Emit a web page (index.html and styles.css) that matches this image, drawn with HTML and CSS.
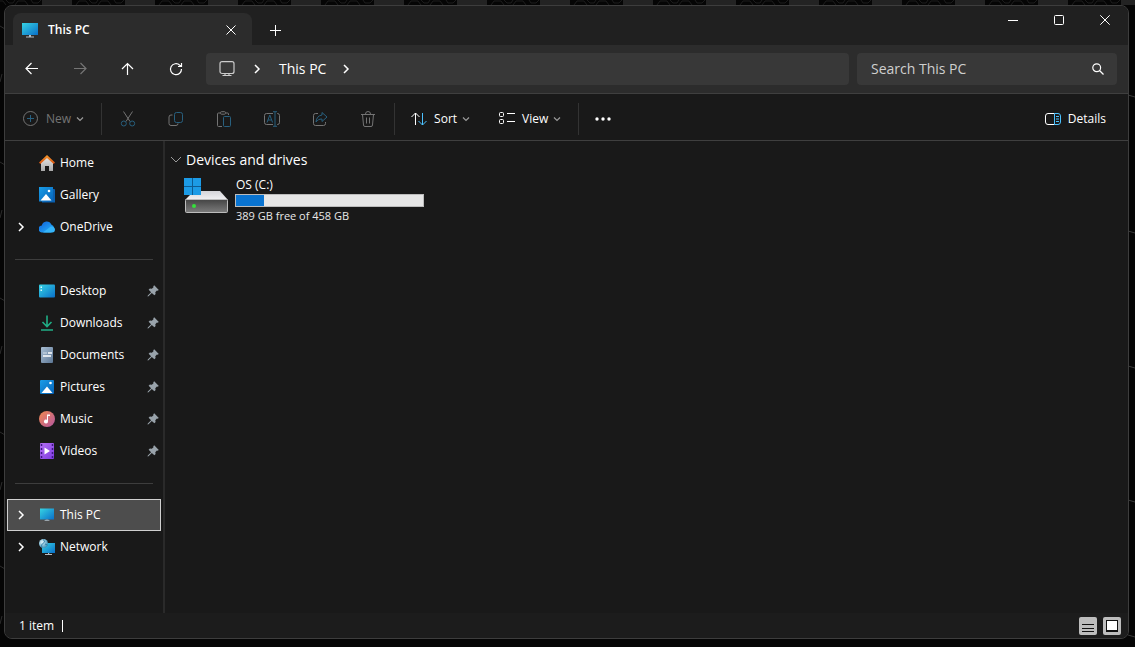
FILE: index.html
```
<!DOCTYPE html>
<html lang="en">
<head>
<meta charset="utf-8">
<meta name="viewport" content="width=device-width, initial-scale=1">
<title>This PC</title>
<link rel="stylesheet" href="styles.css">
</head>
<body>
<svg class="defs" aria-hidden="true">
  <defs>
    <linearGradient id="screen" x1="0" y1="0" x2="1" y2="1"><stop offset="0" stop-color="#36d3e3"/><stop offset="1" stop-color="#0a6fc9"/></linearGradient>
    <linearGradient id="photo" x1="0" y1="0" x2="1" y2="1"><stop offset="0" stop-color="#199de8"/><stop offset="1" stop-color="#0663b8"/></linearGradient>
    <linearGradient id="roof" x1="0" y1="0" x2="0" y2="1"><stop offset="0" stop-color="#f79b2e"/><stop offset="1" stop-color="#d9500f"/></linearGradient>
    <linearGradient id="wall" x1="0" y1="0" x2="0" y2="1"><stop offset="0" stop-color="#e6e6e6"/><stop offset="1" stop-color="#a9a9a9"/></linearGradient>
    <linearGradient id="cloud" x1="0" y1="0" x2="1" y2="1"><stop offset="0" stop-color="#0f5fd8"/><stop offset="1" stop-color="#27b8ff"/></linearGradient>
    <linearGradient id="doc" x1="0" y1="0" x2="1" y2="1"><stop offset="0" stop-color="#a9bfd4"/><stop offset="1" stop-color="#5c7694"/></linearGradient>
    <linearGradient id="music" x1="0" y1="0" x2="1" y2="1"><stop offset="0" stop-color="#f28a4e"/><stop offset="1" stop-color="#b355a0"/></linearGradient>
    <linearGradient id="video" x1="0" y1="0" x2="1" y2="1"><stop offset="0" stop-color="#b56ff5"/><stop offset="1" stop-color="#7d3be0"/></linearGradient>
    <linearGradient id="front" x1="0" y1="0" x2="0" y2="1"><stop offset="0" stop-color="#444"/><stop offset="1" stop-color="#7c7c7c"/></linearGradient>
    <linearGradient id="top" x1="0" y1="0" x2="0" y2="1"><stop offset="0" stop-color="#d4d4d8"/><stop offset="1" stop-color="#f2f2f4"/></linearGradient>
    <radialGradient id="globe" cx=".35" cy=".35" r=".7"><stop offset="0" stop-color="#e3f5fb"/><stop offset="1" stop-color="#3a91b8"/></radialGradient>
    <pattern id="ridges" width="83" height="5" patternUnits="userSpaceOnUse" x="42">
      <path d="M0 0h30v5H0z" fill="#232323"/>
      <path d="M34 5l3-4h7l3 4M56 5l3-4h7l3 4M47 0l3 3h4l2-3M72 0l2 3h5l3-3" fill="none" stroke="#1c1c1c"/>
    </pattern>
    <symbol id="i-pin" viewBox="0 0 12 12"><path d="M7.200 .3 11.800 4.900 10.600 5.800 9.900 5.600 8.300 7.200 8.600 9 7.400 10.300 4.800 7.900 1.500 11.200 .5 11.500.8 10.500 4.100 7.200 1.600 4.700 2.900 3.500 4.800 3.800 6.500 2.200 6.300 1.300z" fill="#99a3ab"/></symbol>
    <symbol id="i-right" viewBox="0 0 8 10"><path d="M2 1l4 4-4 4" fill="none" stroke="currentColor" stroke-width="1.500"/></symbol>
    <symbol id="i-down" viewBox="0 0 8 8"><path d="M1 2.500l3 3 3-3" fill="none" stroke="currentColor" stroke-width="1.200"/></symbol>
    <symbol id="i-pc" viewBox="0 0 16 16"><path d="M0 1h16v12H0z" fill="url(#screen)"/><path d="M7 13h2v1.500h3v1H4v-1h3z" fill="#b5bcc2"/></symbol>
  </defs>
</svg>
<svg class="wallpaper" aria-hidden="true">
  <rect width="100%" height="5" fill="url(#ridges)"/>
  <path d="M0 26l5 3M0 162l5 3M0 298l5 3M0 432l5 3M0 566l5 3M0 82l2-8M0 218l2-8M0 354l2-8M0 490l2-8M0 624l2-8" stroke="#2c2c2c" fill="none"/>
  <svg x="100%" overflow="visible"><path d="M-7 95l7 2M-7 231l7 2M-7 366l7 2M-7 500l7 2M-7 635l7 2" stroke="#3a3a3a" fill="none"/></svg>
</svg>

<div class="window">
  <header class="titlebar">
    <div class="tab">
      <svg class="icon16" viewBox="0 0 16 16"><use href="#i-pc"/></svg>
      <span class="tab-title">This PC</span>
      <button class="tab-close" aria-label="Close tab"><svg width="10" height="10" viewBox="0 0 10 10"><path d="M.5.5l9 9m0-9l-9 9" stroke="currentColor"/></svg></button>
    </div>
    <button class="new-tab" aria-label="New tab"><svg width="11" height="11" viewBox="0 0 11 11"><path d="M5.500 0v11M0 5.500h11" stroke="currentColor"/></svg></button>
    <div class="caption">
      <button aria-label="Minimize"><svg width="10" height="10" viewBox="0 0 10 10"><path d="M0 5.500h10" stroke="currentColor"/></svg></button>
      <button aria-label="Maximize"><svg width="10" height="10" viewBox="0 0 10 10"><rect x=".5" y=".5" width="9" height="9" rx="1" fill="none" stroke="currentColor"/></svg></button>
      <button aria-label="Close"><svg width="10" height="10" viewBox="0 0 10 10"><path d="M.3.3l9.400 9.400m0-9.400L.3 9.700" stroke="currentColor"/></svg></button>
    </div>
  </header>

  <nav class="navbar" aria-label="Navigation">
    <div class="nav-buttons">
      <button aria-label="Back"><svg class="icon16" viewBox="0 0 16 16"><path d="M14 7.500H2.500M7.500 2l-5.500 5.500 5.500 5.500"/></svg></button>
      <button aria-label="Forward" disabled><svg class="icon16" viewBox="0 0 16 16"><path d="M2 7.500h11.500M8.500 2l5.500 5.500L8.500 13"/></svg></button>
      <button aria-label="Up"><svg class="icon16" viewBox="0 0 16 16"><path d="M7.500 14V2.500M2 8l5.500-5.500L13 8"/></svg></button>
      <button aria-label="Refresh"><svg class="icon16" viewBox="0 0 16 16"><path d="M13.500 8A5.500 5.500 0 1 1 11.800 4.200L13.500 5.500M13.500 2v3.500H10"/></svg></button>
    </div>
    <div class="address">
      <svg class="icon16 device" viewBox="0 0 16 16"><rect x="1" y=".7" width="14" height="11.800" rx="2"/><path d="M6 12.500v2M10 12.500v2M3.500 14.500h9"/></svg>
      <svg class="crumb-arrow" viewBox="0 0 8 10"><use href="#i-right"/></svg>
      <a class="crumb" href="#">This PC</a>
      <svg class="crumb-arrow" viewBox="0 0 8 10"><use href="#i-right"/></svg>
    </div>
    <label class="search">
      <input type="text" placeholder="Search This PC" aria-label="Search This PC">
      <svg width="12" height="12" viewBox="0 0 12 12"><circle cx="4.700" cy="4.700" r="3.900"/><path d="M7.500 7.500l4 4"/></svg>
    </label>
  </nav>

  <div class="toolbar" role="toolbar" aria-label="Commands">
    <button class="cmd new" disabled>
      <svg class="icon16" viewBox="0 0 16 16"><circle cx="7.500" cy="7.500" r="7"/><path class="accent" d="M7.500 4v7M4 7.500h7"/></svg>
      <span>New</span><svg class="chev" viewBox="0 0 8 8"><use href="#i-down"/></svg>
    </button>
    <span class="sep"></span>
    <div class="tools">
      <button aria-label="Cut" disabled><svg class="icon16" viewBox="0 0 16 16"><path d="M3.500.5l6.500 10M12.500.5L6 10.500"/><circle class="accent" cx="3.800" cy="12.500" r="2.500"/><circle class="accent" cx="12.200" cy="12.500" r="2.500"/></svg></button>
      <button aria-label="Copy" disabled><svg class="icon16" viewBox="0 0 16 16"><path d="M4.500 4H3a2 2 0 0 0-2 2v6.500a2 2 0 0 0 2 2h5a2 2 0 0 0 2-2"/><rect class="accent" x="6.500" y="1.500" width="8" height="10" rx="2"/></svg></button>
      <button aria-label="Paste" disabled><svg class="icon16" viewBox="0 0 16 16"><path d="M6 15.500H2.500a1 1 0 0 1-1-1V3a1 1 0 0 1 1-1H4M10 2h1.500a1 1 0 0 1 1 1v1"/><rect x="4.500" y=".7" width="5" height="2.500" rx="1"/><rect class="accent" x="7.500" y="5.500" width="7" height="10" rx="1"/></svg></button>
      <button aria-label="Rename" disabled><svg class="icon16" viewBox="0 0 16 16"><path d="M9 2.500H2.500a2 2 0 0 0-2 2v7a2 2 0 0 0 2 2H9M13 2.500h.5a2 2 0 0 1 2 2v7a2 2 0 0 1-2 2H13"/><path class="accent" d="M3 11.500L5.800 4l2.800 7.500M4 9h3.500M11 1v14M9 .7h4M9 15.300h4"/></svg></button>
      <button aria-label="Share" disabled><svg class="icon16" viewBox="0 0 16 16"><path d="M6 2.500H3.500a2 2 0 0 0-2 2v8a2 2 0 0 0 2 2h8a2 2 0 0 0 2-2V11"/><path class="accent" d="M10 1.500L15 6l-5 4.500V8C7 8 5.500 9 4 11c.3-4 2.500-6.500 6-7z"/></svg></button>
      <button aria-label="Delete" disabled><svg class="icon16" viewBox="0 0 16 16"><path d="M1 3.500h14M5.500 3.500V3a2.500 2.500 0 0 1 5 0v.5M2.500 3.500l1 10.500a1.500 1.500 0 0 0 1.500 1.500h6a1.500 1.500 0 0 0 1.500-1.500l1-10.500M6.500 6.500v6M9.500 6.500v6"/></svg></button>
    </div>
    <span class="sep"></span>
    <div class="menus">
      <button class="cmd">
        <svg class="icon16" viewBox="0 0 16 16"><path d="M4.500 14V2M.5 6l4-4 4 4"/><path class="accent" d="M11.500 2v12M7.500 10l4 4 4-4"/></svg>
        <span>Sort</span><svg class="chev" viewBox="0 0 8 8"><use href="#i-down"/></svg>
      </button>
      <button class="cmd">
        <svg class="icon16" viewBox="0 0 16 16"><rect x=".5" y="1.500" width="4" height="4" rx="1"/><rect x=".5" y="8.500" width="4" height="4" rx="1"/><path d="M8 2.500h8M8 10.500h8"/></svg>
        <span>View</span><svg class="chev" viewBox="0 0 8 8"><use href="#i-down"/></svg>
      </button>
    </div>
    <span class="sep"></span>
    <button class="more" aria-label="See more"><svg width="16" height="4" viewBox="0 0 16 4"><circle cx="2" cy="2" r="1.700"/><circle cx="8" cy="2" r="1.700"/><circle cx="14" cy="2" r="1.700"/></svg></button>
    <button class="cmd details">
      <svg class="icon16" viewBox="0 0 16 16"><path d="M9.500 2.500H3a2.500 2.500 0 0 0-2.500 2.500v6A2.500 2.500 0 0 0 3 13.500h6.500"/><path class="accent" d="M9.500 2.500H13A2.500 2.500 0 0 1 15.500 5v6a2.500 2.500 0 0 1-2.500 2.500H9.500zM11 5.500h3M11 8h3M11 10.500h3"/></svg>
      <span>Details</span>
    </button>
  </div>

  <div class="body">
    <aside class="sidebar">
      <ul class="places">
        <li><a href="#"><span class="twist"></span><svg class="icon16" viewBox="0 0 16 16"><path d="M2 7l6-5 6 5v9h-4v-5H6v5H2z" fill="url(#wall)"/><path d="M8 0l8 7.500-1.300 1.500L8 3 1.300 9 0 7.500z" fill="url(#roof)"/></svg><span>Home</span></a></li>
        <li><a href="#"><span class="twist"></span><svg class="icon16" viewBox="0 0 16 16"><path d="M3 2h12a1 1 0 0 1 1 1v12.500H3z" fill="#0b5fae"/><path d="M0 0h14v14.500H0z" fill="url(#photo)"/><path d="M1.500 13.500L7 7l5.500 6.500z" fill="#fff"/><circle cx="10" cy="4" r="1.300" fill="#fff"/></svg><span>Gallery</span></a></li>
        <li><a href="#"><span class="twist"><svg viewBox="0 0 8 10"><use href="#i-right"/></svg></span><svg class="icon16" viewBox="0 0 16 16"><path d="M3.500 13.500A3.500 3.500 0 0 1 2.800 6.500a5 5 0 0 1 9.500-1A4.200 4.200 0 0 1 12 13.500z" fill="url(#cloud)"/><path d="M4 13.500L11.800 7.500c2.800-.3 4.200 1.500 4.200 3.100a2.900 2.900 0 0 1-3 2.900z" fill="#35b5fa"/></svg><span>OneDrive</span></a></li>
        <li class="rule"></li>
        <li><a href="#"><span class="twist"></span><svg class="icon16" viewBox="0 0 16 16"><rect y="1.500" width="16" height="13" rx="1" fill="url(#screen)"/><path d="M1.500 3.500h1.500V5H1.500zM1.500 6.500h1.500V8H1.500z" fill="#d9fbff"/></svg><span>Desktop</span><svg class="pin" viewBox="0 0 12 12"><use href="#i-pin"/></svg></a></li>
        <li><a href="#"><span class="twist"></span><svg class="icon16" viewBox="0 0 16 16"><path d="M8 .5v11M3.500 7L8 11.500 12.500 7M2 15h12" fill="none" stroke="#20ae86" stroke-width="1.600"/></svg><span>Downloads</span><svg class="pin" viewBox="0 0 12 12"><use href="#i-pin"/></svg></a></li>
        <li><a href="#"><span class="twist"></span><svg class="icon16" viewBox="0 0 16 16"><rect x="2" width="12" height="16" rx="1" fill="url(#doc)"/><path d="M9 6h4M4 9h8" stroke="#fff" stroke-width="1.500"/><path d="M4 6h4" stroke="#d7e1eb"/></svg><span>Documents</span><svg class="pin" viewBox="0 0 12 12"><use href="#i-pin"/></svg></a></li>
        <li><a href="#"><span class="twist"></span><svg class="icon16" viewBox="0 0 16 16"><rect x="1" y="1" width="14" height="14" rx="1" fill="url(#photo)"/><path d="M2.500 14L8 7.500l5.500 6.500z" fill="#fff"/><circle cx="11.500" cy="4" r="1.300" fill="#fff"/></svg><span>Pictures</span><svg class="pin" viewBox="0 0 12 12"><use href="#i-pin"/></svg></a></li>
        <li><a href="#"><span class="twist"></span><svg class="icon16" viewBox="0 0 16 16"><circle cx="8" cy="8" r="8" fill="url(#music)"/><path d="M8 3.500h3v1.600H9v5.400a2 2 0 1 1-1-1.700z" fill="#fff"/></svg><span>Music</span><svg class="pin" viewBox="0 0 12 12"><use href="#i-pin"/></svg></a></li>
        <li><a href="#"><span class="twist"></span><svg class="icon16" viewBox="0 0 16 16"><rect x="1" width="14" height="16" rx="1" fill="url(#video)"/><path d="M2.500 1v14M13.500 1v14" stroke="#3f1683" stroke-width="1.500" stroke-dasharray="2 2"/><path d="M5.500 4.500v7L11 8z" fill="#fff"/></svg><span>Videos</span><svg class="pin" viewBox="0 0 12 12"><use href="#i-pin"/></svg></a></li>
        <li class="rule"></li>
        <li><a href="#" class="selected" aria-current="page"><span class="twist"><svg viewBox="0 0 8 10"><use href="#i-right"/></svg></span><svg class="icon16" viewBox="0 0 16 16"><path d="M1 1.500h14v11H1z" fill="url(#screen)"/><path d="M7 12.500h2l2 1.500H5z" fill="#9aa5ad"/></svg><span>This PC</span></a></li>
        <li><a href="#"><span class="twist"><svg viewBox="0 0 8 10"><use href="#i-right"/></svg></span><svg class="icon16" viewBox="0 0 16 16"><path d="M3 4h13v10H3z" fill="url(#screen)"/><path d="M9 14h1.200v1H13v1H6v-1h3z" fill="#b5bcc2"/><circle cx="4.500" cy="4.500" r="4.500" fill="url(#globe)"/><path d="M4 .5C6 2 6 3 4.500 4S2 6 3 8.500M6 5l2.500 1" stroke="#2f7fa8" fill="none"/></svg><span>Network</span></a></li>
      </ul>
    </aside>
    <main class="content">
      <h1 class="group"><svg viewBox="0 0 12 8"><path d="M1 1l5 5 5-5"/></svg><span>Devices and drives</span></h1>
      <a class="drive" href="#">
        <svg class="drive-icon" viewBox="0 0 45 36"><path d="M10 13h26l8 9H1z" fill="url(#top)"/><rect x="1.500" y="21.500" width="42" height="13" rx="1" fill="url(#front)" stroke="#bdbdbd"/><circle cx="10" cy="28" r="2" fill="#35e03a"/><path d="M0 0h17v17H0z" fill="#0d5c93"/><path d="M0 0h8v8H0zM9 0h8v8H9zM0 9h8v8H0zM9 9h8v8H9z" fill="#1c9be6"/></svg>
        <span class="drive-info">
          <span class="drive-name">OS (C:)</span>
          <span class="meter"><span class="meter-used" style="width:15%"></span></span>
          <span class="free">389 GB free of 458 GB</span>
        </span>
      </a>
    </main>
  </div>

  <footer class="status">
    <span class="count">1 item</span>
    <button aria-label="Details view"><svg width="18" height="18" viewBox="0 0 18 18"><path d="M3 7.500h12M3 11.500h12M3 14.500h12" stroke="#111"/></svg></button>
    <button aria-label="Large icons view"><svg width="18" height="18" viewBox="0 0 18 18"><rect x="3.500" y="3.500" width="11" height="10" fill="#fff" stroke="#111"/><path d="M3 14.500h12" stroke="#111"/></svg></button>
  </footer>
</div>
</body>
</html>
```
FILE: styles.css
```
* { box-sizing: border-box; }
body {
  margin: 0;
  min-height: 100vh;
  padding: 5px 6px 8px 4px;
  display: flex;
  background: #050505;
  color: #fff;
  font: 12px/16px "Open Sans", "Noto Sans", sans-serif;
}
button {
  display: flex;
  align-items: center;
  justify-content: center;
  margin: 0;
  padding: 0;
  border: 0;
  background: none;
  color: inherit;
  font: inherit;
}
a { color: inherit; text-decoration: none; }
svg { flex: none; display: block; }
.defs { position: absolute; width: 0; height: 0; }
.wallpaper { position: absolute; inset: 0; width: 100%; height: 100%; }
.icon16 { width: 16px; height: 16px; }

.window {
  position: relative;
  flex: 1;
  min-width: 0;
  display: flex;
  flex-direction: column;
  overflow: hidden;
  border: 1px solid #3d3d3d;
  border-radius: 8px;
  background: #191919;
}

.titlebar { display: flex; height: 39px; background: #202020; }
.tab {
  display: flex;
  align-items: center;
  width: 239px;
  margin: 7px 0 0 8px;
  padding: 1px 16px 0 9px;
  gap: 10px;
  border-radius: 8px 8px 0 0;
  background: #2c2c2c;
}
.tab-title { flex: 1; font-weight: 600; }
.new-tab { width: 32px; height: 32px; margin: 8px 0 0 7px; }
.caption { display: flex; margin-left: auto; height: 28px; }
.caption button { width: 46px; }

.navbar {
  display: flex;
  align-items: center;
  gap: 8px;
  padding: 8px 11px;
  background: #2c2c2c;
  border-bottom: 1px solid #3f3f3f;
}
.nav-buttons { display: flex; gap: 16px; margin-right: 6px; }
.nav-buttons button { width: 32px; height: 32px; }
.nav-buttons svg, .address .device, .search svg { fill: none; stroke: currentColor; stroke-width: 1.2; }
.nav-buttons button:disabled { color: #757575; }
.address {
  flex: 1;
  display: flex;
  align-items: center;
  height: 32px;
  padding: 0 13px;
  border-radius: 4px;
  background: #383838;
  font-size: 14px;
}
.address .device { color: #ccc; }
.crumb-arrow { width: 8px; height: 10px; margin: 0 18px; }
.crumb + .crumb-arrow { margin-left: 16px; }
.search {
  display: flex;
  align-items: center;
  width: 260px;
  height: 32px;
  padding: 0 13px 0 14px;
  border-radius: 4px;
  background: #383838;
}
.search input {
  flex: 1;
  min-width: 0;
  padding: 0;
  border: 0;
  outline: 0;
  background: none;
  color: #fff;
  font: inherit;
  font-size: 14px;
}
.search input::placeholder { color: #cfcfcf; opacity: 1; }

.toolbar {
  display: flex;
  align-items: center;
  height: 47px;
  padding: 3px 22px 0 18px;
  border-bottom: 1px solid #3f3f3f;
}
.toolbar svg { fill: none; stroke: currentColor; }
.toolbar .accent { stroke: #4cc2ff; }
.toolbar button:disabled { color: #747474; }
.toolbar button:disabled .accent { stroke: #28607f; }
.cmd { gap: 7px; height: 32px; }
.cmd .chev { width: 8px; height: 8px; margin-left: -2px; color: #9a9a9a; }
.sep { width: 1px; height: 32px; background: #333; }
.new { margin-right: 17px; }
.tools { display: flex; gap: 16px; margin: 0 10px; }
.tools button { width: 32px; height: 32px; }
.menus { display: flex; gap: 29px; margin: 0 17px 0 16px; }
.more { width: 48px; height: 32px; }
.toolbar .more svg { fill: currentColor; stroke: none; }
.details { margin-left: auto; }

.body { flex: 1; display: flex; min-height: 0; }
.sidebar { width: 160px; padding: 6px 2px 0; border-right: 2px solid #2a2a2a; }
.places { margin: 0; padding: 0; list-style: none; }
.places a {
  display: flex;
  align-items: center;
  gap: 5px;
  height: 32px;
  padding-left: 9px;
  border: 1px solid transparent;
}
.places a.selected { border-color: #d0d0d0; background: #4d4d4d; }
.twist { width: 17px; }
.twist svg { width: 8px; height: 10px; }
.pin { width: 12px; height: 12px; margin-left: auto; margin-right: 1px; }
.rule { height: 32px; padding: 16px 8px 0; }
.rule::before { content: ""; display: block; height: 1px; background: #3d3d3d; }

.content { flex: 1; padding: 9px 5px; }
.group {
  display: flex;
  align-items: center;
  gap: 4px;
  margin: 0;
  font-size: 14px;
  font-weight: 400;
  line-height: 20px;
}
.group svg { width: 12px; height: 8px; fill: none; stroke: #999; }
.drive { display: flex; gap: 6px; margin: 7px 0 0 14px; }
.drive-icon { width: 45px; height: 36px; margin-top: 1px; }
.drive-info { display: flex; flex-direction: column; width: 189px; }
.drive-name, .free { padding-left: 1px; }
.meter { height: 13px; margin: 1px 0; border: 1px solid #bcbcbc; background: #e6e6e6; }
.meter-used { display: block; height: 100%; background: #0a74d1; }
.free { color: #e8e8e8; font-size: 11px; }

.status {
  display: flex;
  align-items: center;
  gap: 6px;
  height: 25px;
  padding: 0 7px 0 14px;
  background: #1c1c1c;
}
.count { margin-right: auto; padding-right: 8px; border-right: 1px solid #fff; line-height: 12px; }
.status button { width: 18px; height: 18px; border-radius: 2px; background: #bdbdbd; }
```
